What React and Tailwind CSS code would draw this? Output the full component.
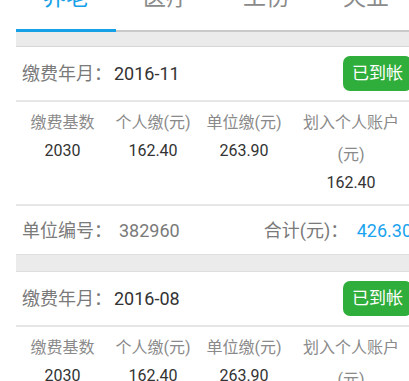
import React from "react";

const tabs = ["养老", "医疗", "工伤", "失业"];

const records = [
  { month: "2016-11", base: "2030", personal: "162.40", unit: "263.90", account: "162.40", code: "382960", total: "426.30" },
  { month: "2016-08", base: "2030", personal: "162.40", unit: "263.90", account: "162.40", code: "382960", total: "426.30" },
];

function Record({ r }) {
  return (
    <div className="bg-white">
      <div className="flex items-center justify-between h-[55px] pl-[6px] pr-[4px] border-b-2 border-[#e6e6e6]">
        <div className="text-[18px] leading-[24px]">
          <span className="text-[#7a7a7a]">缴费年月：</span>
          <span className="text-[#333] ml-[2px]">{r.month}</span>
        </div>
        <span className="bg-[#2fae3b] text-white text-[17px] leading-[35px] h-[35px] px-[9px] rounded-[7px]">已到帐</span>
      </div>
      <div className="grid grid-cols-[93px_88px_94px_120px] pt-[5px] pb-[9px] border-b-2 border-[#e6e6e6] text-center text-[16px]">
        <div>
          <div className="text-[#8a8a8a] leading-[32px]">缴费基数</div>
          <div className="text-[#333] leading-[24px]">{r.base}</div>
        </div>
        <div>
          <div className="text-[#8a8a8a] leading-[32px]">个人缴(元)</div>
          <div className="text-[#333] leading-[24px]">{r.personal}</div>
        </div>
        <div>
          <div className="text-[#8a8a8a] leading-[32px]">单位缴(元)</div>
          <div className="text-[#333] leading-[24px]">{r.unit}</div>
        </div>
        <div>
          <div className="text-[#8a8a8a] leading-[32px]">划入个人账户<br />(元)</div>
          <div className="text-[#333] leading-[24px]">{r.account}</div>
        </div>
      </div>
      <div className="flex items-center justify-between h-[48px] pl-[6px] pr-[4px] text-[18px] text-[#7a7a7a]">
        <div>
          单位编号：<span className="ml-[7px]">{r.code}</span>
        </div>
        <div>
          合计(元)： <span className="text-[#1aa3ee] ml-[4px]">{r.total}</span>
        </div>
      </div>
    </div>
  );
}

export default function App() {
  return (
    <div className="w-[409px] h-[381px] overflow-hidden bg-white" style={{ fontFamily: 'Roboto, "Noto Sans CJK SC", sans-serif' }}>
      <div className="ml-[16px] w-[400px]">
        <div className="-mt-[13px] flex">
          {tabs.map((t, i) => (
            <div key={t} className="w-[100px] flex flex-col items-center">
              <div className={"text-[23px] leading-[22px] " + (i === 0 ? "text-[#16a1e7]" : "text-[#8a8a8a]")}>{t}</div>
              <div className={"w-full mt-[20px] " + (i === 0 ? "h-[3px] bg-[#16a1e7]" : "h-[3px] border-t border-b-2 border-t-white border-b-[#c9c9c9]")} />
            </div>
          ))}
        </div>
        <div className="h-[15px] bg-[#ebebeb] border-b border-[#d6d6d6]" />
        <Record r={records[0]} />
        <div className="h-[18px] bg-[#ebebeb] border-y border-[#dedede]" />
        <Record r={records[1]} />
      </div>
    </div>
  );
}
